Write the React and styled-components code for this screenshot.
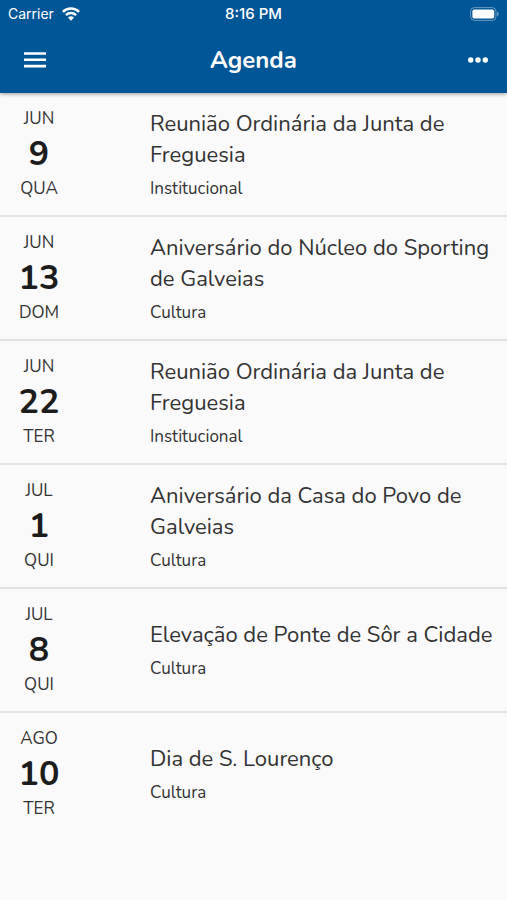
import React from "react";
import styled, { createGlobalStyle } from "styled-components";

const colors = {
  blue: "#015697",
  page: "#fafafa",
  line: "#e3e3e3",
  text: "#333333",
  strong: "#1c1c1c",
};

const events = [
  {
    month: "JUN",
    day: 9,
    weekday: "QUA",
    title: "Reunião Ordinária da Junta de Freguesia",
    category: "Institucional",
  },
  {
    month: "JUN",
    day: 13,
    weekday: "DOM",
    title: "Aniversário do Núcleo do Sporting de Galveias",
    category: "Cultura",
  },
  {
    month: "JUN",
    day: 22,
    weekday: "TER",
    title: "Reunião Ordinária da Junta de Freguesia",
    category: "Institucional",
  },
  {
    month: "JUL",
    day: 1,
    weekday: "QUI",
    title: "Aniversário da Casa do Povo de Galveias",
    category: "Cultura",
  },
  {
    month: "JUL",
    day: 8,
    weekday: "QUI",
    title: "Elevação de Ponte de Sôr a Cidade",
    category: "Cultura",
  },
  {
    month: "AGO",
    day: 10,
    weekday: "TER",
    title: "Dia de S. Lourenço",
    category: "Cultura",
  },
];

const GlobalStyle = createGlobalStyle`
  * {
    box-sizing: border-box;
  }
  body {
    margin: 0;
    background: ${colors.page};
    color: ${colors.text};
    font-family: "Nunito", "Open Sans", "Noto Sans", sans-serif;
  }
`;

const Header = styled.header`
  background: ${colors.blue};
  color: #fff;
  box-shadow: 0 1px 4px rgba(0, 0, 0, 0.4);
`;

const StatusBar = styled.div`
  display: grid;
  grid-template-columns: 1fr auto 1fr;
  align-items: center;
  height: 27px;
  padding: 0 8px;
  font-family: Inter, sans-serif;
  font-size: 14px;
`;

const Carrier = styled.span`
  display: flex;
  align-items: center;
  gap: 8px;
`;

const Clock = styled.time`
  font-size: 15px;
  font-weight: 500;
`;

const Battery = styled.span`
  display: flex;
  justify-content: flex-end;
`;

const Toolbar = styled.div`
  display: grid;
  grid-template-columns: 1fr auto 1fr;
  align-items: center;
  height: 66px;
  padding: 0 8px;

  h1 {
    margin: 0;
    font-size: 24px;
    font-weight: 700;
    line-height: 32px;
    text-align: center;
  }
`;

const IconButton = styled.button`
  display: flex;
  align-items: center;
  justify-content: center;
  justify-self: ${({ $side }) => $side};
  width: ${({ $side }) => ($side === "start" ? "54px" : "42px")};
  height: 48px;
  padding: 0;
  border: 0;
  background: none;
  color: inherit;
`;

const EventList = styled.ul`
  margin: 0;
  padding: 0;
  list-style: none;
`;

const EventRow = styled.li`
  display: grid;
  grid-template-columns: 78px 1fr;
  column-gap: 72px;
  align-items: center;
  padding: 12px 8px 12px 0;

  & + & {
    border-top: 2px solid ${colors.line};
  }
`;

const DateBlock = styled.time`
  display: flex;
  flex-direction: column;
  align-items: center;
  font-size: 17px;
  line-height: 28px;

  strong {
    color: ${colors.strong};
    font-size: 34px;
    font-weight: 700;
    line-height: 42px;
  }
`;

const Details = styled.div`
  h2 {
    margin: 0;
    font-size: 22px;
    font-weight: 400;
    line-height: 31px;
  }
  p {
    margin: 7px 0 0;
    font-size: 17px;
    line-height: 22px;
  }
`;

function WifiIcon() {
  return (
    <svg width="18" height="14" viewBox="0 0 18 14" aria-hidden="true">
      <g fill="none" stroke="#fff" strokeWidth="2.5">
        <path d="M.9 4.8a11.6 11.6 0 0 1 16.2 0" />
        <path d="M3.9 8.1a7.3 7.3 0 0 1 10.2 0" />
      </g>
      <path d="M9 13.7l-3-3.1a4.3 4.3 0 0 1 6 0z" fill="#fff" />
    </svg>
  );
}

function BatteryIcon() {
  return (
    <svg width="29" height="14" viewBox="0 0 29 14" aria-hidden="true">
      <rect x=".6" y=".6" width="25.4" height="12.8" rx="3.8" fill="none" stroke="#fff" strokeOpacity=".4" />
      <rect x="2.4" y="2.4" width="21.8" height="9.2" rx="1.8" fill="#fff" />
      <path d="M27.2 4.8q1.6.6 1.6 2.2t-1.6 2.2z" fill="#fff" fillOpacity=".45" />
    </svg>
  );
}

function MenuIcon() {
  return (
    <svg width="22" height="16" viewBox="0 0 22 16" fill="#fff" aria-hidden="true">
      <path d="M0 .2h22v2.6H0zM0 6.5h22v2.6H0zM0 12.8h22v2.6H0z" />
    </svg>
  );
}

function MoreIcon() {
  return (
    <svg width="20" height="6" viewBox="0 0 20 6" fill="#fff" aria-hidden="true">
      <circle cx="2.7" cy="3" r="2.7" />
      <circle cx="10" cy="3" r="2.7" />
      <circle cx="17.3" cy="3" r="2.7" />
    </svg>
  );
}

function AgendaItem({ event }) {
  return (
    <EventRow>
      <DateBlock>
        <span>{event.month}</span>
        <strong>{event.day}</strong>
        <span>{event.weekday}</span>
      </DateBlock>
      <Details>
        <h2>{event.title}</h2>
        <p>{event.category}</p>
      </Details>
    </EventRow>
  );
}

function App() {
  return (
    <>
      <GlobalStyle />
      <Header>
        <StatusBar>
          <Carrier>
            Carrier
            <WifiIcon />
          </Carrier>
          <Clock>8:16 PM</Clock>
          <Battery>
            <BatteryIcon />
          </Battery>
        </StatusBar>
        <Toolbar>
          <IconButton type="button" aria-label="Menu" $side="start">
            <MenuIcon />
          </IconButton>
          <h1>Agenda</h1>
          <IconButton type="button" aria-label="Mais opções" $side="end">
            <MoreIcon />
          </IconButton>
        </Toolbar>
      </Header>
      <main>
        <EventList>
          {events.map((event) => (
            <AgendaItem key={`${event.month}-${event.day}`} event={event} />
          ))}
        </EventList>
      </main>
    </>
  );
}

export default App;
